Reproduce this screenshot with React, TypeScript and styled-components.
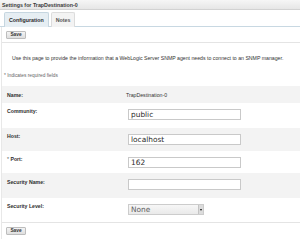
import React from 'react';
import styled, { createGlobalStyle } from 'styled-components';

const GlobalStyle = createGlobalStyle`
  body {
    margin: 0;
    background: #ffffff;
    font-family: "Liberation Sans", Arial, sans-serif;
  }
`;

const Page = styled.div`
  width: 300px;
  height: 244px;
  overflow: hidden;
  background: #ffffff;
`;

const TitleBar = styled.div`
  height: 10px;
  padding-left: 2px;
  display: flex;
  align-items: center;
  font-size: 5.3px;
  font-weight: bold;
  color: #3a3a3a;
  background: linear-gradient(#f6f6f6, #e6e6e6);
  border-bottom: 1px solid #d2d2d2;
  box-sizing: border-box;
`;

const TabStrip = styled.div`
  display: flex;
  gap: 2px;
  padding: 2px 0 0 4px;
  height: 17px;
  box-sizing: border-box;
  border-bottom: 1px solid #c8d8e2;
`;

const Tab = styled.div<{ $active?: boolean }>`
  height: 15px;
  padding: 0 4px;
  box-sizing: border-box;
  display: flex;
  align-items: center;
  font-size: 5.3px;
  font-weight: bold;
  color: ${({ $active }) => ($active ? '#2b2b2b' : '#555555')};
  background: ${({ $active }) => ($active ? '#e6eef3' : '#f3f3f3')};
  border: 1px solid ${({ $active }) => ($active ? '#c6d6e0' : '#dcdcdc')};
  border-bottom: none;
  border-radius: 2px 2px 0 0;
`;

const Panel = styled.div`
  border-left: 1px solid #e8e8e8;
  margin-left: 1px;
`;

const ButtonBar = styled.div<{ $line?: boolean }>`
  display: flex;
  align-items: flex-start;
  padding: 4px 0 0 4px;
  height: 16px;
  box-sizing: border-box;
  border-bottom: ${({ $line }) => ($line ? '1px solid #e4e4e4' : 'none')};
`;

const SaveButton = styled.button`
  height: 8px;
  width: 20px;
  padding: 0;
  line-height: 6px;
  font-family: "Liberation Sans", Arial, sans-serif;
  font-size: 4.8px;
  font-weight: bold;
  color: #333333;
  background: linear-gradient(#f4f4f4, #dedede);
  border: 1px solid #bdbdbd;
  border-radius: 1px;
`;

const Description = styled.p`
  margin: 0;
  padding: 12px 0 0 10px;
  font-size: 5.2px;
  line-height: 6px;
  color: #333333;
`;

const RequiredNote = styled.p`
  margin: 0;
  padding: 12px 0 0 2px;
  font-size: 4.8px;
  line-height: 6px;
  color: #666666;
`;

const Form = styled.div`
  margin-top: 7px;
  border-bottom: 1px solid #e4e4e4;
`;

const Row = styled.div<{ $gray?: boolean; $h: number }>`
  display: grid;
  grid-template-columns: 121px 1fr;
  align-items: start;
  height: ${({ $h }) => $h}px;
  padding-left: 5px;
  box-sizing: border-box;
  background: ${({ $gray }) => ($gray ? '#f3f3f3' : '#ffffff')};
`;

const Label = styled.div<{ $top: number }>`
  padding-top: ${({ $top }) => $top}px;
  font-size: 5.2px;
  line-height: 6px;
  font-weight: bold;
  color: #2e2e2e;
`;

const Value = styled.div`
  padding-top: 6px;
  margin-left: -2px;
  font-size: 5.2px;
  line-height: 6px;
  color: #333333;
`;

const Field = styled.div`
  padding-top: 6px;
`;

const Input = styled.div`
  width: 113px;
  height: 11px;
  box-sizing: border-box;
  border: 1px solid #c9c9c9;
  background: #ffffff;
  padding-left: 2px;
  display: flex;
  align-items: center;
  font-family: "DejaVu Sans", sans-serif;
  font-size: 7.4px;
  color: #2a2a2a;
`;

const Select = styled.div`
  width: 76px;
  height: 11px;
  box-sizing: border-box;
  border: 1px solid #cccccc;
  background: linear-gradient(#f7f7f7, #e9e9e9);
  padding-left: 2px;
  display: flex;
  align-items: center;
  justify-content: space-between;
  font-family: "DejaVu Sans", sans-serif;
  font-size: 7.4px;
  color: #606060;
`;

const Arrow = styled.span`
  width: 4px;
  height: 9px;
  display: flex;
  align-items: center;
  justify-content: center;
  border-left: 1px solid #c4c4c4;
  background: #dcdcdc;
  &::after {
    content: '';
    border-left: 1.5px solid transparent;
    border-right: 1.5px solid transparent;
    border-top: 2px solid #111111;
  }
`;

const Req = styled.span`
  font-weight: normal;
  color: #555555;
`;

export default function App() {
  return (
    <Page>
      <GlobalStyle />
      <TitleBar>Settings for TrapDestination-0</TitleBar>
      <TabStrip>
        <Tab $active>Configuration</Tab>
        <Tab>Notes</Tab>
      </TabStrip>
      <Panel>
        <ButtonBar $line>
          <SaveButton>Save</SaveButton>
        </ButtonBar>
        <Description>
          Use this page to provide the information that a WebLogic Server SNMP agent needs to connect to an SNMP manager.
        </Description>
        <RequiredNote>* Indicates required fields</RequiredNote>
        <Form>
          <Row $gray $h={17}>
            <Label $top={6}>Name:</Label>
            <Value>TrapDestination-0</Value>
          </Row>
          <Row $h={25}>
            <Label $top={5}>Community:</Label>
            <Field>
              <Input>public</Input>
            </Field>
          </Row>
          <Row $gray $h={23}>
            <Label $top={5}>Host:</Label>
            <Field>
              <Input>localhost</Input>
            </Field>
          </Row>
          <Row $h={22}>
            <Label $top={5}>
              <Req>* </Req>Port:
            </Label>
            <Field>
              <Input>162</Input>
            </Field>
          </Row>
          <Row $gray $h={25}>
            <Label $top={6}>Security Name:</Label>
            <Field>
              <Input />
            </Field>
          </Row>
          <Row $h={24}>
            <Label $top={5}>Security Level:</Label>
            <Field>
              <Select>
                None
                <Arrow />
              </Select>
            </Field>
          </Row>
        </Form>
        <ButtonBar>
          <SaveButton>Save</SaveButton>
        </ButtonBar>
      </Panel>
    </Page>
  );
}
